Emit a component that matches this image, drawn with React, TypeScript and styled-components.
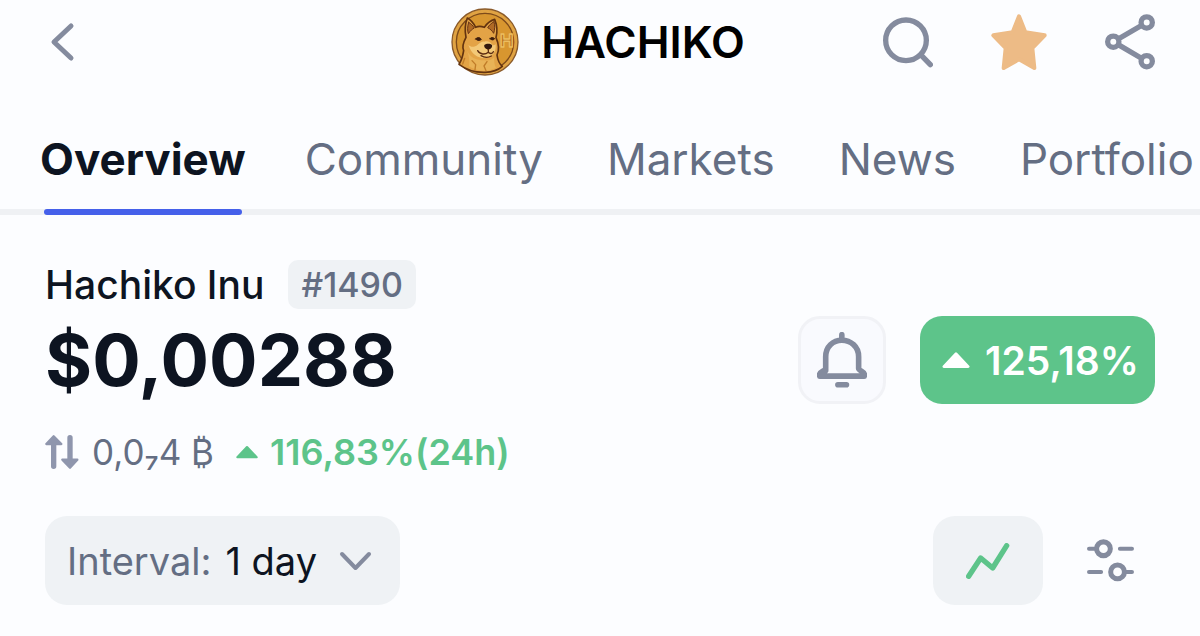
import React, { useState } from "react";
import styled, { createGlobalStyle } from "styled-components";

const color = {
  page: "#fcfdff",
  ink: "#0d1421",
  muted: "#646e83",
  icon: "#848b9e",
  line: "#eff1f4",
  fill: "#eff2f5",
  blue: "#4560ea",
  green: "#5dc48a",
  star: "#edbb86",
};

const GlobalStyle = createGlobalStyle`
  *, *::before, *::after { box-sizing: border-box; }
  body {
    margin: 0;
    background: ${color.page};
    color: ${color.ink};
    font-family: Inter, "Liberation Sans", sans-serif;
    overflow-x: hidden;
  }
  button, select { font: inherit; color: inherit; }
  svg { display: block; flex: none; }
`;

const Header = styled.header`
  display: grid;
  grid-template-columns: 1fr auto 1fr;
  align-items: center;
  height: 84px;
  padding: 0 45px;
`;

const IconButton = styled.button`
  display: flex;
  align-items: center;
  justify-content: center;
  padding: 0;
  border: 0;
  background: none;
  cursor: pointer;
`;

const Brand = styled.div`
  display: flex;
  align-items: center;
  gap: 22px;
  padding-right: 4px;
`;

const Ticker = styled.h1`
  margin: 0;
  font-size: 44px;
  line-height: 52px;
  font-weight: 600;
  color: #000;
`;

const HeaderActions = styled.div`
  display: flex;
  align-items: center;
  justify-content: flex-end;
  gap: 58px;
`;

const Tabs = styled.nav`
  display: flex;
  gap: 64px;
  padding: 49px 0 0 45px;
  border-bottom: 6px solid ${color.line};
  white-space: nowrap;
`;

const Tab = styled.a<{ $active?: boolean }>`
  position: relative;
  margin: ${(p) => (p.$active ? "0 -5px" : "0")};
  padding-bottom: 24px;
  font-size: 44px;
  line-height: 52px;
  font-weight: ${(p) => (p.$active ? 700 : 400)};
  color: ${(p) => (p.$active ? color.ink : color.muted)};
  text-decoration: none;

  &::after {
    content: "";
    display: ${(p) => (p.$active ? "block" : "none")};
    position: absolute;
    left: 4px;
    right: 4px;
    bottom: -6px;
    height: 6px;
    border-radius: 3px;
    background: ${color.blue};
  }
`;

const Content = styled.main`
  padding: 45px 45px 32px;
`;

const Row = styled.div`
  display: flex;
  align-items: center;
`;

const NameRow = styled(Row)`
  gap: 24px;
`;

const CoinName = styled.h2`
  margin: 0;
  font-size: 39px;
  line-height: 48px;
  font-weight: 500;
`;

const Rank = styled.span`
  padding: 0 13px;
  border-radius: 10px;
  background: ${color.fill};
  color: ${color.muted};
  font-size: 34px;
  line-height: 49px;
  font-weight: 500;
`;

const PriceRow = styled(Row)`
  justify-content: space-between;
  margin-top: 7px;
`;

const Price = styled.strong`
  font-size: 72px;
  line-height: 88px;
  font-weight: 700;
`;

const PriceActions = styled(Row)`
  gap: 34px;
`;

const AlertButton = styled(IconButton)`
  width: 88px;
  height: 88px;
  border: 3px solid #f1f2f6;
  border-radius: 22px;
  background: #f9fafe;
`;

const Change = styled(Row)`
  gap: 15px;
  height: 88px;
  padding: 0 16px 0 22px;
  border-radius: 22px;
  background: ${color.green};
  color: #fff;
  font-size: 39px;
  font-weight: 600;
`;

const BtcRow = styled(Row)`
  margin-top: 26px;
  font-size: 36px;
  line-height: 44px;
  color: ${color.muted};
`;

const BtcPrice = styled.span`
  margin: 0 22px 0 13px;
  font-size: 35px;
`;

const DayChange = styled(Row)`
  gap: 12px;
  color: ${color.green};
  font-weight: 600;
`;

const Controls = styled(Row)`
  justify-content: space-between;
  margin-top: 42px;
`;

const Interval = styled.label`
  display: flex;
  align-items: center;
  gap: 14px;
  height: 89px;
  padding: 0 28px 0 22px;
  border-radius: 22px;
  background: ${color.fill};
  color: ${color.muted};
  font-size: 38px;
`;

const IntervalSelect = styled.select`
  appearance: none;
  field-sizing: content;
  padding: 0;
  margin-right: 8px;
  border: 0;
  background: none;
  color: ${color.ink};
`;

const ChartTools = styled(Row)`
  gap: 22px;
`;

const ChartButton = styled(IconButton)`
  width: 110px;
  height: 89px;
  border-radius: 22px;
  background: ${color.fill};
`;

const SettingsButton = styled(IconButton)`
  width: 90px;
  height: 89px;
`;

const BackIcon = () => (
  <svg width="36" height="40" viewBox="0 0 36 40" fill="none" stroke={color.icon} strokeWidth="5" strokeLinecap="round" strokeLinejoin="round">
    <path d="M26 4 9 20 26 36" />
  </svg>
);

const SearchIcon = () => (
  <svg width="50" height="51" viewBox="66 50 150 153" fill="none" stroke={color.icon} strokeWidth="16" strokeLinecap="round">
    <circle cx="135" cy="120" r="61" />
    <path d="m181 165 27 28" />
  </svg>
);

const StarIcon = () => (
  <svg width="56" height="56" viewBox="392 41 168 168" fill={color.star} stroke={color.star} strokeWidth="12" strokeLinejoin="round">
    <path d="m476 48 19 48 58 9-37 38 6 60-46-26-46 26 6-60-37-38 58-9z" />
  </svg>
);

const ShareIcon = () => (
  <svg width="50" height="56" viewBox="735 42 151 168" fill="none" stroke={color.icon} strokeWidth="16">
    <circle cx="861" cy="67" r="17" />
    <circle cx="760" cy="125" r="17" />
    <circle cx="861" cy="184" r="17" />
    <path d="m775 117 70-41M775 134l70 41" />
  </svg>
);

const BellIcon = () => (
  <svg width="50" height="56" viewBox="110 95 151 170" fill="none" stroke={color.icon} strokeWidth="17" strokeLinecap="round" strokeLinejoin="round">
    <path d="M185 103v15M136 212v-42c0-31 22-50 49-50s51 19 51 50v36c0 6 17 10 17 16v7H118v-7c0-6 18-10 18-16M173 255h26" />
  </svg>
);

const UpIcon = ({ width, height }: { width: number; height: number }) => (
  <svg width={width} height={height} viewBox="0 0 80 46" fill="currentColor" stroke="currentColor" strokeWidth="8" strokeLinejoin="round">
    <path d="M40 5 75 42H5z" />
  </svg>
);

const SwapIcon = () => (
  <svg width="34" height="36" viewBox="44 42 102 106" fill="#8f96ad" stroke="#8f96ad" strokeLinejoin="round" strokeLinecap="round">
    <path d="M70 62v76M119 52v76" strokeWidth="16" />
    <path d="M70 48 93 71H48zM119 142l-23-24h45z" strokeWidth="7" />
  </svg>
);

const ChevronIcon = () => (
  <svg width="33" height="20" viewBox="0 0 33 20" fill="none" stroke={color.icon} strokeWidth="4" strokeLinecap="round" strokeLinejoin="round">
    <path d="m3 3 13.500 14L30 3" />
  </svg>
);

const LineChartIcon = () => (
  <svg width="44" height="36" viewBox="169 128 132 108" fill="none" stroke={color.green} strokeWidth="16" strokeLinecap="round" strokeLinejoin="round">
    <path d="m177 228 36-55 36 30 42-67" />
  </svg>
);

const SlidersIcon = () => (
  <svg width="47" height="43" viewBox="532 118 140 128" fill="none" stroke={color.icon} strokeLinecap="round">
    <g strokeWidth="12">
      <path d="M538 147h18M630 147h36M538 216h36M648 216h18" />
    </g>
    <g strokeWidth="15">
      <circle cx="581" cy="147" r="20.500" />
      <circle cx="623" cy="216" r="20.500" />
    </g>
  </svg>
);

const CoinLogo = () => (
  <svg width="68" height="68" viewBox="34 23 204 204" strokeLinejoin="round" strokeLinecap="round" role="img" aria-label="Hachiko coin">
    <circle cx="136" cy="125" r="99" fill="#e0a343" stroke="#8a5a2a" strokeWidth="4" />
    <circle cx="136" cy="125" r="86" fill="#d8962f" stroke="#7d4a1a" strokeWidth="4" />
    <path d="M83 53c-7 18-8 38-4 58-8 15-13 28-7 40-3 18-8 32-14 41 20 15 46 25 78 24 24-1 40-7 52-18-10-8-14-20-16-34 8-17 5-34-3-52 5-20 3-38-4-55-13 4-24 13-31 24-10-4-18-4-26 0-6-12-14-22-25-28z" fill="#e3a346" stroke="#63330f" strokeWidth="5" />
    <path d="M87 66c-4 13-4 24-1 34 6-9 12-14 18-17-4-7-10-13-17-17zM163 64c-9 5-15 11-19 18 8 4 14 10 18 17 4-12 4-24 1-35z" fill="#b06a25" stroke="#6b3513" strokeWidth="3" />
    <path d="M86 133c8 8 18 8 28 0 7-5 12-10 20-9 10-3 17 1 22 7 5 5 9 4 12 1 2 21-9 37-29 41-24 1-43-10-53-40z" fill="#f3c978" />
    <path d="M82 151c10 20 25 29 53 29 14 2 22-2 29-9-1 13 0 24 5 31-23 13-56 13-81-4 2-16 1-31-6-47z" fill="#e9b357" />
    <path d="m97 181 11 12-2 15M142 184l-9 13 6 14M75 174l-6 17" fill="none" stroke="#c07c28" strokeWidth="4" />
    <path d="M108 116c5-6 12-6 17 1-4 5-10 5-17-1zM151 115c4-5 9-4 14 0-4 5-9 5-14 0z" fill="#3c1d0d" stroke="#3c1d0d" strokeWidth="3" />
    <path d="M134 134c6-5 17-5 23 0 2 7-5 13-11 14-7-1-14-7-12-14z" fill="#32190d" />
    <path d="M146 147v9M114 151c7 13 23 12 32 5 5 5 12 5 15-2M124 166c10 6 20 7 31 1" fill="none" stroke="#5b2b10" strokeWidth="4" />
    <text x="181" y="140" fontFamily="Inter, sans-serif" fontSize="54" fontWeight="700" textAnchor="start" fill="#b87322" stroke="#ecbd60" strokeWidth="4">H</text>
  </svg>
);

const tabs = ["Overview", "Community", "Markets", "News", "Portfolio"];

export default function App() {
  const [active, setActive] = useState("Overview");
  return (
    <>
      <GlobalStyle />
      <Header>
        <Row>
          <IconButton aria-label="Back"><BackIcon /></IconButton>
        </Row>
        <Brand>
          <CoinLogo />
          <Ticker>HACHIKO</Ticker>
        </Brand>
        <HeaderActions>
          <IconButton aria-label="Search"><SearchIcon /></IconButton>
          <IconButton aria-label="Remove from watchlist"><StarIcon /></IconButton>
          <IconButton aria-label="Share"><ShareIcon /></IconButton>
        </HeaderActions>
      </Header>
      <Tabs>
        {tabs.map((tab) => (
          <Tab key={tab} href={`#${tab.toLowerCase()}`} $active={tab === active} onClick={() => setActive(tab)}>
            {tab}
          </Tab>
        ))}
      </Tabs>
      <Content>
        <NameRow>
          <CoinName>Hachiko Inu</CoinName>
          <Rank>#1490</Rank>
        </NameRow>
        <PriceRow>
          <Price>$0,00288</Price>
          <PriceActions>
            <AlertButton aria-label="Price alert"><BellIcon /></AlertButton>
            <Change><UpIcon width={28} height={16} />125,18%</Change>
          </PriceActions>
        </PriceRow>
        <BtcRow>
          <SwapIcon />
          <BtcPrice>0,0₇4 ₿</BtcPrice>
          <DayChange><UpIcon width={22} height={14} />116,83%(24h)</DayChange>
        </BtcRow>
        <Controls>
          <Interval>
            Interval:
            <IntervalSelect defaultValue="1 day">
              <option>1 day</option>
              <option>7 days</option>
              <option>1 month</option>
            </IntervalSelect>
            <ChevronIcon />
          </Interval>
          <ChartTools>
            <ChartButton aria-label="Line chart"><LineChartIcon /></ChartButton>
            <SettingsButton aria-label="Chart settings"><SlidersIcon /></SettingsButton>
          </ChartTools>
        </Controls>
      </Content>
    </>
  );
}
